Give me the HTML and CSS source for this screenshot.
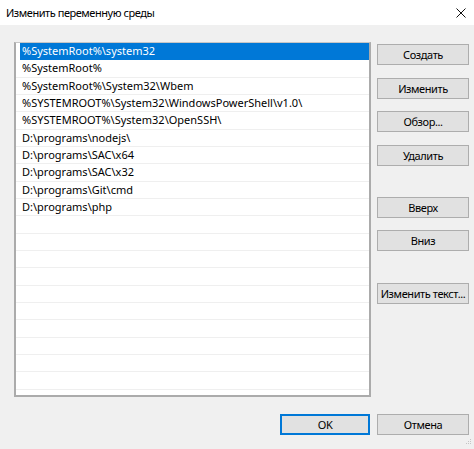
FILE: index.html
```html
<!DOCTYPE html>
<html lang="ru">
<head>
<meta charset="utf-8">
<title>Изменить переменную среды</title>
<link rel="stylesheet" href="styles.css">
</head>
<body>
<div class="window">
  <div class="titlebar">
    <span class="title">Изменить переменную среды</span>
    <svg class="close" width="10" height="10" viewBox="0 0 10 10"><path d="M0.5 0.5 L9.5 9.5 M9.5 0.5 L0.5 9.5" stroke="#111" stroke-width="1" fill="none"/></svg>
  </div>
  <div class="content">
    <div class="main">
      <div class="listbox">
        <div class="row selected"><span>%SystemRoot%\system32</span></div>
        <div class="row"><span>%SystemRoot%</span></div>
        <div class="row"><span>%SystemRoot%\System32\Wbem</span></div>
        <div class="row"><span>%SYSTEMROOT%\System32\WindowsPowerShell\v1.0\</span></div>
        <div class="row"><span>%SYSTEMROOT%\System32\OpenSSH\</span></div>
        <div class="row"><span>D:\programs\nodejs\</span></div>
        <div class="row"><span>D:\programs\SAC\x64</span></div>
        <div class="row"><span>D:\programs\SAC\x32</span></div>
        <div class="row"><span>D:\programs\Git\cmd</span></div>
        <div class="row"><span>D:\programs\php</span></div>
        <div class="row"></div>
        <div class="row"></div>
        <div class="row"></div>
        <div class="row"></div>
        <div class="row"></div>
        <div class="row"></div>
        <div class="row"></div>
        <div class="row"></div>
        <div class="row"></div>
        <div class="row"></div>
      </div>
      <div class="buttons">
        <button class="btn">Создать</button>
        <button class="btn">Изменить</button>
        <button class="btn">Обзор...</button>
        <button class="btn">Удалить</button>
        <button class="btn spaced">Вверх</button>
        <button class="btn">Вниз</button>
        <button class="btn spaced">Изменить текст...</button>
      </div>
    </div>
    <div class="footer">
      <button class="btn ok">OK</button>
      <button class="btn cancel">Отмена</button>
    </div>
  </div>
  <svg class="grip" width="8" height="8" viewBox="0 0 8 8"><g fill="#c4c4c4"><rect x="6" y="0" width="1" height="1"/><rect x="4" y="2" width="1" height="1"/><rect x="6" y="2" width="1" height="1"/><rect x="2" y="4" width="1" height="1"/><rect x="4" y="4" width="1" height="1"/><rect x="6" y="4" width="1" height="1"/></g></svg>
</div>
</body>
</html>
```
FILE: styles.css
```css
html, body {
  margin: 0;
  padding: 0;
}
body {
  width: 474px;
  height: 449px;
  background: #f0f0f0;
  font-family: "Noto Sans", "Open Sans", "DejaVu Sans", sans-serif;
  font-size: 11px;
  color: #000;
  overflow: hidden;
}
.window {
  position: relative;
  width: 474px;
  height: 449px;
  background: #f0f0f0;
  display: flex;
  flex-direction: column;
}
.titlebar {
  height: 25px;
  background: #fff;
  display: flex;
  align-items: center;
  justify-content: space-between;
  padding: 0 8px 0 6px;
  box-sizing: border-box;
  flex: none;
}
.title {
  font-size: 11px;
  letter-spacing: -0.45px;
  color: #000;
  line-height: 16px;
}
.close {
  display: block;
}
.content {
  flex: 1;
  display: flex;
  flex-direction: column;
  padding: 17px 5px 0 14px;
}
.main {
  display: flex;
  gap: 6px;
}
.listbox {
  width: 353px;
  height: 352px;
  background: #fff;
  border-top: 1px solid #c6c6c6;
  border-left: 2px solid #ababab;
  border-right: 2px solid #ababab;
  border-bottom: 2px solid #ababab;
  overflow: hidden;
  flex: none;
}
.row {
  height: 17.33px;
  box-sizing: border-box;
  border-bottom: 1px solid #efefef;
  display: flex;
  align-items: center;
  white-space: nowrap;
  line-height: 16px;
}
.row span {
  padding-left: 6px;
}
.row.selected {
  background: #0078d7;
  color: #fff;
  margin-left: 4px;
  border-bottom-color: #0078d7;
}
.row.selected span {
  padding-left: 2px;
}
.buttons {
  display: flex;
  flex-direction: column;
  gap: 12.6px;
  padding-top: 2px;
}
.btn {
  width: 92px;
  height: 21px;
  box-sizing: border-box;
  background: #e1e1e1;
  border: 1px solid #adadad;
  font-family: "Noto Sans", "Open Sans", "DejaVu Sans", sans-serif;
  font-size: 11px;
  letter-spacing: -0.4px;
  color: #000;
  padding: 0;
  margin: 0;
  line-height: 17px;
  white-space: nowrap;
}
.btn.spaced {
  margin-top: 18.5px;
}
.footer {
  display: flex;
  justify-content: flex-end;
  gap: 7px;
  margin-top: 17px;
}
.btn.ok {
  width: 90px;
  border: 2px solid #0078d7;
  line-height: 15px;
}
.btn.cancel {
  width: 92px;
}
.grip {
  position: absolute;
  right: 2px;
  bottom: 2px;
}
```
